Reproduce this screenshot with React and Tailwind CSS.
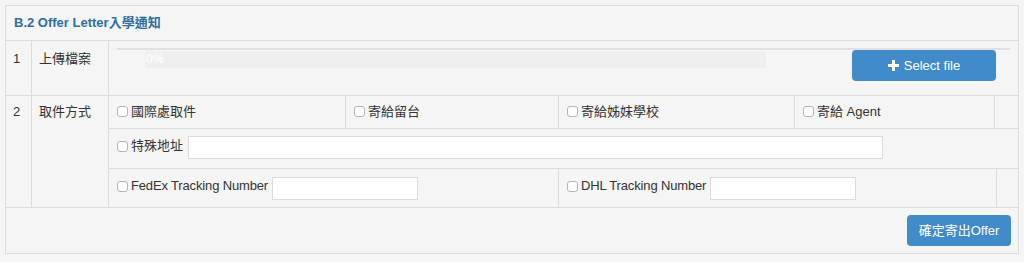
import React from 'react';

const Box = () => (
  <span className="inline-block w-[11px] h-[11px] rounded-[3px] border border-[#b5b5b5] bg-white mr-[3px] shrink-0" />
);

const Check = ({ label, className = '' }) => (
  <label className={`flex items-center ${className}`}>
    <Box />
    <span>{label}</span>
  </label>
);

const App = () => {
  return (
    <div className="min-h-[262px] bg-[#f5f5f5] pt-[5px] pl-[5px] font-['Liberation_Sans','Noto_Sans_CJK_TC',sans-serif] text-[13px] text-[#333]">
      <div className="w-[1014px] border border-[#dcdcdc]">
        {/* Title */}
        <div className="h-[35px] flex items-center pl-[8px] border-b border-[#dcdcdc] text-[13px] font-bold text-[#2f6f9d]">
          B.2 Offer Letter入學通知
        </div>

        {/* Row 1 */}
        <div className="flex h-[55px] border-b border-[#dcdcdc]">
          <div className="w-[26px] border-r border-[#dcdcdc] pl-[7px] pt-[8px]">1</div>
          <div className="w-[77px] border-r border-[#dcdcdc] pl-[7px] pt-[8px]">上傳檔案</div>
          <div className="flex-1 px-[8px] pt-[7px]">
            <div className="h-[2px] bg-[#e1e1e1]" />
            <div className="flex items-start">
              <div className="ml-[28px] mt-[1px] w-[621px] h-[17px] rounded-[3px] bg-[#efefef] text-white text-[12px] leading-[17px] pl-[1px]">
                0%
              </div>
              <button className="ml-auto mr-[14px] w-[144px] h-[31px] rounded-[4px] bg-[#428bca] text-white flex items-center justify-center gap-[5px] text-[13px]">
                <svg width="11" height="11" viewBox="0 0 11 11">
                  <path d="M4 0h3v4h4v3H7v4H4V7H0V4h4z" fill="white" />
                </svg>
                Select file
              </button>
            </div>
          </div>
        </div>

        {/* Row 2 */}
        <div className="flex h-[112px] border-b border-[#dcdcdc]">
          <div className="w-[26px] border-r border-[#dcdcdc] pl-[7px] pt-[6px]">2</div>
          <div className="w-[77px] border-r border-[#dcdcdc] pl-[7px] pt-[6px]">取件方式</div>
          <div className="flex-1 flex flex-col">
            <div className="flex h-[33px] border-b border-[#dcdcdc]">
              <div className="w-[237px] border-r border-[#dcdcdc] pl-[8px] pt-[6px]">
                <Check label="國際處取件" />
              </div>
              <div className="w-[213px] border-r border-[#dcdcdc] pl-[8px] pt-[6px]">
                <Check label="寄給留台" />
              </div>
              <div className="w-[236px] border-r border-[#dcdcdc] pl-[8px] pt-[6px]">
                <Check label="寄給姊妹學校" />
              </div>
              <div className="w-[200px] border-r border-[#dcdcdc] pl-[8px] pt-[6px]">
                <Check label="寄給 Agent" />
              </div>
              <div className="flex-1" />
            </div>
            <div className="flex items-center h-[40px] border-b border-[#dcdcdc] pl-[8px] pb-[2px]">
              <Check label="特殊地址" className="mb-[3px]" />
              <input className="ml-[5px] w-[695px] h-[23px] bg-white border border-[#dcdcdc]" />
            </div>
            <div className="flex h-[38px]">
              <div className="w-[450px] border-r border-[#dcdcdc] pl-[8px] pt-[1px] flex items-center">
                <Check label="FedEx Tracking Number" className="tracking-[-0.15px] mb-[5px]" />
                <input className="ml-[4px] w-[146px] h-[23px] bg-white border border-[#dcdcdc]" />
              </div>
              <div className="w-[438px] border-r border-[#dcdcdc] pl-[8px] pt-[1px] flex items-center">
                <Check label="DHL Tracking Number" className="tracking-[-0.15px] mb-[5px]" />
                <input className="ml-[4px] w-[146px] h-[23px] bg-white border border-[#dcdcdc]" />
              </div>
              <div className="flex-1" />
            </div>
          </div>
        </div>

        {/* Footer */}
        <div className="flex justify-end h-[45px] pt-[7px] pr-[7px]">
          <button className="w-[104px] h-[31px] rounded-[4px] bg-[#428bca] text-white text-[13px]">
            確定寄出Offer
          </button>
        </div>
      </div>
    </div>
  );
};

export default App;
